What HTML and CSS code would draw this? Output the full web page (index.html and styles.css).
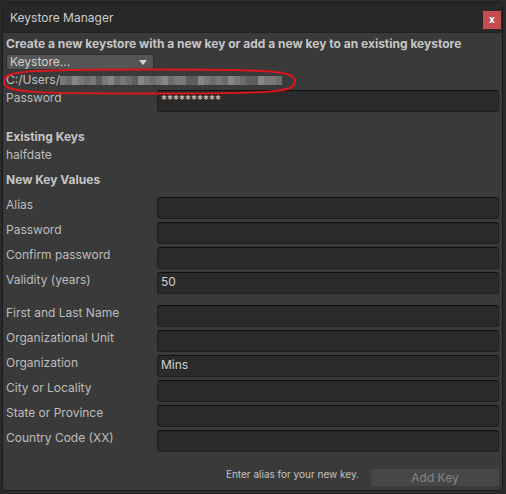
FILE: index.html
```html
<!DOCTYPE html>
<html>
<head>
<meta charset="utf-8">
<link rel="stylesheet" href="styles.css">
</head>
<body>
<div class="window">
  <div class="titlebar">
    <span class="title">Keystore Manager</span>
    <span class="close">x</span>
  </div>
  <div class="content">
    <div class="heading first">Create a new keystore with a new key or add a new key to an existing keystore</div>
    <div class="dropdown"><span>Keystore...</span><span class="arrow"></span></div>
    <div class="path">
      <span class="ptext">C:/Users/</span>
      <span class="blur">
        <i class="c3"></i><i class="c2"></i><i class="c4"></i><i class="c3"></i><i class="c2"></i><i class="c3"></i><i class="c1"></i><i class="c3"></i><i class="c4"></i><i class="c2"></i><i class="c3"></i><i class="c2"></i><i class="c1"></i><i class="c4"></i><i class="c3"></i><i class="c2"></i><i class="c3"></i><i class="c4"></i><i class="c2"></i><i class="c3"></i><i class="c3"></i><i class="c1"></i><i class="c1"></i><i class="c4"></i><i class="c3"></i><i class="c2"></i><i class="c3"></i><i class="c2"></i><i class="c4"></i><i class="c3"></i><i class="c2"></i><i class="c1"></i><i class="c1"></i><i class="c4"></i><i class="c3"></i><i class="c3"></i><i class="c2"></i>
      </span>
      <svg class="ring" width="296" height="27" viewBox="0 0 296 27"><path d="M2,13.5 C2,2.5 24,1.5 148,1.5 C272,1.5 293,2.5 293,13.5 C293,24.5 272,25.5 148,25.5 C24,25.5 2,24.5 2,13.5 Z" fill="none" stroke="#e0141c" stroke-width="2"/></svg>
    </div>
    <div class="row r-pass"><span class="label">Password</span><span class="input">**********</span></div>

    <div class="heading ek">Existing Keys</div>
    <div class="plain">halfdate</div>
    <div class="heading nk">New Key Values</div>

    <div class="group g1">
      <div class="row"><span class="label">Alias</span><span class="input"></span></div>
      <div class="row"><span class="label">Password</span><span class="input"></span></div>
      <div class="row"><span class="label">Confirm password</span><span class="input"></span></div>
      <div class="row"><span class="label">Validity (years)</span><span class="input">50</span></div>
    </div>
    <div class="group g2">
      <div class="row"><span class="label">First and Last Name</span><span class="input"></span></div>
      <div class="row"><span class="label">Organizational Unit</span><span class="input"></span></div>
      <div class="row"><span class="label">Organization</span><span class="input">Mins</span></div>
      <div class="row"><span class="label">City or Locality</span><span class="input"></span></div>
      <div class="row"><span class="label">State or Province</span><span class="input"></span></div>
      <div class="row"><span class="label">Country Code (XX)</span><span class="input"></span></div>
    </div>
    <div class="footer">
      <span class="hint">Enter alias for your new key.</span>
      <span class="button">Add Key</span>
    </div>
  </div>
</div>
</body>
</html>
```

FILE: styles.css
```css
html, body {
  margin: 0;
  padding: 0;
}
body {
  width: 506px;
  height: 494px;
  background: #2a2a2a;
  font-family: Inter, "Noto Sans", sans-serif;
  font-size: 12px;
  color: #c2c2c2;
  overflow: hidden;
}
.window {
  margin: 2px 0 0 2px;
  width: 501px;
  height: 489px;
  box-sizing: border-box;
  border: 1px solid #1b1b1b;
  border-radius: 5px;
  background: #3a3a3a;
  overflow: hidden;
}
.titlebar {
  height: 29px;
  background: #282828;
  display: flex;
  align-items: center;
  justify-content: space-between;
  padding-left: 7px;
  border-bottom: 1px solid #232323;
}
.title {
  color: #cdcdcd;
  font-size: 12px;
}
.close {
  width: 18px;
  height: 18px;
  background: #c44e4f;
  color: #fff;
  font-size: 10px;
  font-weight: 700;
  line-height: 17px;
  text-align: center;
  align-self: flex-end;
  margin-right: 1px;
  margin-bottom: 3px;
}
.content {
  padding: 0 3px 0 3px;
  display: flex;
  flex-direction: column;
}
.heading {
  font-weight: 700;
  color: #c6c6c6;
  line-height: 14px;
  height: 14px;
  white-space: nowrap;
}
.first { margin-top: 4px; }
.dropdown {
  margin-top: 3px;
  width: 148px;
  height: 16px;
  box-sizing: border-box;
  background: #555555;
  border: 1px solid #2e2e2e;
  border-radius: 3px;
  display: flex;
  align-items: center;
  justify-content: space-between;
  padding: 0 6px 0 3px;
  color: #d0d0d0;
  line-height: 14px;
}
.arrow {
  width: 0;
  height: 0;
  border-left: 4px solid transparent;
  border-right: 4px solid transparent;
  border-top: 5px solid #d6d6d6;
}
.path {
  position: relative;
  margin-top: 3px;
  height: 14px;
  line-height: 14px;
  display: flex;
  align-items: center;
}
.ptext { color: #c2c2c2; }
.blur {
  display: flex;
  height: 9px;
  margin-top: 1px;
}
.blur i {
  display: block;
  width: 6px;
  height: 9px;
}
.c1 { background: #5e5e5e; }
.c2 { background: #6c6c6c; }
.c3 { background: #787878; }
.c4 { background: #868686; }
.ring {
  position: absolute;
  left: -4px;
  top: -5px;
}
.row {
  display: flex;
  height: 22px;
}
.r-pass { margin-top: 3px; }
.label {
  width: 151px;
  flex: none;
  padding-top: 1px;
  line-height: 14px;
  color: #bdbdbd;
}
.input {
  flex: 1;
  height: 22px;
  box-sizing: border-box;
  background: #2a2a2a;
  border: 1px solid #212121;
  border-top-color: #101010;
  border-radius: 3px;
  padding: 2px 3px 0 3px;
  line-height: 14px;
  color: #d2d2d2;
}
.ek { margin-top: 18px; }
.plain {
  margin-top: 4px;
  height: 14px;
  line-height: 14px;
  color: #bdbdbd;
}
.nk { margin-top: 11px; }
.group {
  display: flex;
  flex-direction: column;
  gap: 3px;
}
.g1 { margin-top: 10px; }
.g2 { margin-top: 11px; }
.footer {
  margin-top: 16px;
  display: flex;
  justify-content: flex-end;
  align-items: center;
  gap: 12px;
}
.hint {
  font-size: 10px;
  color: #c2c2c2;
  margin-bottom: 7px;
}
.button {
  width: 128px;
  height: 17px;
  background: #474747;
  border-radius: 2px;
  color: #858585;
  text-align: center;
  line-height: 17px;
  font-size: 12px;
}
```
